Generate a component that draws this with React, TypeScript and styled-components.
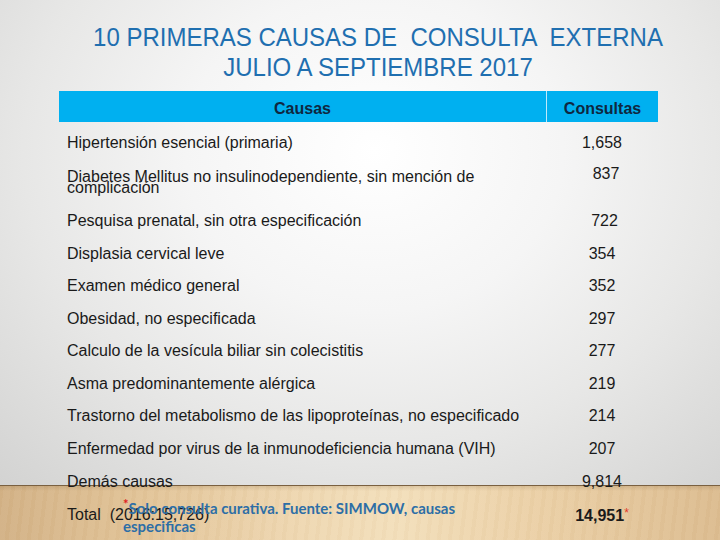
import React from "react";
import styled, { createGlobalStyle } from "styled-components";

const Global = createGlobalStyle`
  html, body { margin: 0; padding: 0; }
  body { width: 720px; height: 540px; overflow: hidden; }
`;

const Page = styled.div`
  position: relative;
  width: 720px;
  height: 540px;
  overflow: hidden;
  font-family: "Liberation Sans", Arial, sans-serif;
  color: #1a1a1a;
  background:
    radial-gradient(ellipse 75% 85% at 52% 28%, #ffffff 0%, #f5f5f5 35%, #e7e7e6 65%, #d3d3d2 100%);
  display: flex;
  flex-direction: column;
`;

const Floor = styled.div`
  position: absolute;
  left: 0;
  right: 0;
  top: 485px;
  bottom: 0;
  border-top: 1px solid #7a6040;
  background:
    repeating-linear-gradient(97deg, rgba(160, 120, 70, 0.03) 0px, rgba(160, 120, 70, 0.03) 4px, rgba(255, 255, 255, 0.03) 4px, rgba(255, 255, 255, 0.03) 11px),
    linear-gradient(180deg, rgba(120, 90, 50, 0.18) 0px, rgba(120, 90, 50, 0) 5px),
    linear-gradient(90deg, #d3b286 0%, #e2c498 20%, #efd8b2 42%, #f3dfbb 55%, #ebd0a6 75%, #dcbc90 100%);
`;

const Title = styled.h1`
  position: relative;
  margin: 22px 0 0 0;
  font-weight: normal;
  font-size: 25px;
  line-height: 30px;
  color: #1f6fb0;
  text-align: center;
  padding-left: 36px;
`;

const TitleLine = styled.span`
  display: block;
  white-space: pre;
  transform: scaleX(0.96);
`;

const Table = styled.div`
  position: relative;
  margin: 9px 0 0 59px;
  width: 599px;
  display: flex;
  flex-direction: column;
`;

const HeaderRow = styled.div`
  display: grid;
  grid-template-columns: 487px 112px;
  height: 31px;
  background: #00b0f0;
  margin-bottom: 4px;
`;

const HeaderCell = styled.div<{ $divider?: boolean }>`
  display: flex;
  align-items: center;
  justify-content: center;
  padding-top: 5px;
  font-size: 16px;
  font-weight: bold;
  color: #0f2740;
  border-left: ${(p) => (p.$divider ? "1px solid #bfe9fb" : "none")};
  box-sizing: border-box;
`;

const Row = styled.div<{ $h: number }>`
  position: relative;
  display: grid;
  grid-template-columns: 487px 112px;
  height: ${(p) => p.$h}px;
  align-items: center;
`;

const Cause = styled.div<{ $tight?: boolean }>`
  padding-left: 8px;
  font-size: 16px;
  line-height: ${(p) => (p.$tight ? "11px" : "18px")};
  white-space: nowrap;
`;

const Num = styled.div<{ $top?: number; $shift?: number; $bold?: boolean }>`
  text-align: center;
  font-size: 16px;
  font-weight: ${(p) => (p.$bold ? "bold" : "normal")};
  align-self: ${(p) => (p.$top !== undefined ? "start" : "center")};
  padding-top: ${(p) => p.$top ?? 0}px;
  padding-left: ${(p) => p.$shift ?? 0}px;
`;

const Star = styled.span`
  color: #e03a2a;
  font-size: 12px;
  font-weight: normal;
  vertical-align: 4px;
`;

const Note = styled.div`
  position: absolute;
  left: 64px;
  top: -3px;
  font-family: Lato, "Open Sans", sans-serif;
  font-weight: bold;
  font-size: 15px;
  line-height: 18px;
  color: #2d6ea6;
  width: 360px;
`;

const NoteStar = styled.span`
  color: #e02020;
  font-size: 13px;
  vertical-align: 5px;
`;

const rows: { c: React.ReactNode; n: string; h: number; tight?: boolean; top?: number; shift?: number }[] = [
  { c: "Hipertensión esencial (primaria)", n: "1,658", h: 33 },
  { c: <>Diabetes Mellitus no insulinodependiente, sin mención de<br />complicación</>, n: "837", h: 45, tight: true, top: 6, shift: 8 },
  { c: "Pesquisa prenatal, sin otra especificación", n: "722", h: 33, shift: 5 },
  { c: "Displasia cervical leve", n: "354", h: 33 },
  { c: "Examen médico general", n: "352", h: 32 },
  { c: "Obesidad, no especificada", n: "297", h: 33 },
  { c: "Calculo de la vesícula biliar sin colecistitis", n: "277", h: 32 },
  { c: "Asma predominantemente alérgica", n: "219", h: 33 },
  { c: "Trastorno del metabolismo de las lipoproteínas, no especificado", n: "214", h: 32 },
  { c: "Enfermedad por virus de la inmunodeficiencia humana (VIH)", n: "207", h: 33 },
  { c: "Demás causas", n: "9,814", h: 33 },
];

export default function App() {
  return (
    <Page>
      <Global />
      <Floor />
      <Title>
        <TitleLine>{"10 PRIMERAS CAUSAS DE  CONSULTA  EXTERNA"}</TitleLine>
        <TitleLine>JULIO A SEPTIEMBRE 2017</TitleLine>
      </Title>
      <Table>
        <HeaderRow>
          <HeaderCell>Causas</HeaderCell>
          <HeaderCell $divider>Consultas</HeaderCell>
        </HeaderRow>
        {rows.map((r, i) => (
          <Row key={i} $h={r.h}>
            <Cause $tight={r.tight}>{r.c}</Cause>
            <Num $top={r.top} $shift={r.shift}>{r.n}</Num>
          </Row>
        ))}
        <Row $h={34}>
          <Cause>Total&nbsp; (2016:15,726)</Cause>
          <Num $bold>
            14,951<Star>*</Star>
          </Num>
          <Note>
            <NoteStar>*</NoteStar>Solo consulta curativa. Fuente: SIMMOW, causas
            <br />especificas
          </Note>
        </Row>
      </Table>
    </Page>
  );
}
